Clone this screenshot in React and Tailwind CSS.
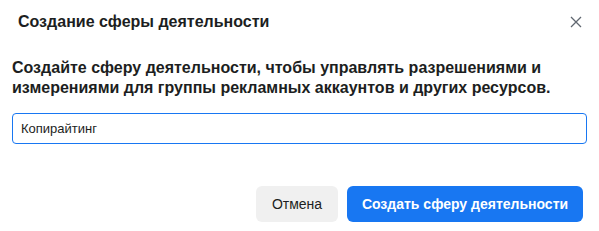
import React from "react";

export default function App() {
  return (
    <div className="w-[599px] h-[231px] bg-white text-[#1c1e21]" style={{ fontFamily: '"Liberation Sans", Arial, sans-serif' }}>
      <div className="flex items-center justify-between pl-[18px] pr-[17px] pt-[12px]">
        <div className="text-[16px] font-bold leading-[20px]">Создание сферы деятельности</div>
        <svg width="12" height="12" viewBox="0 0 12 12" className="text-[#606770]">
          <path d="M1 1 L11 11 M11 1 L1 11" stroke="currentColor" strokeWidth="1.3" fill="none" />
        </svg>
      </div>
      <div className="px-[12px] pt-[26px]">
        <div className="text-[16px] font-bold leading-[20px]">
          Создайте сферу деятельности, чтобы управлять разрешениями и измерениями для группы рекламных аккаунтов и других ресурсов.
        </div>
        <div className="mt-[15px] h-[31px] w-[575px] border border-[#1877f2] rounded-[4px] flex items-center px-[8px] text-[13px]">
          Копирайтинг
        </div>
      </div>
      <div className="flex justify-end gap-[9px] pr-[16px] pt-[42px]">
        <button className="h-[36px] w-[82px] rounded-[6px] bg-[#f0f0f0] text-[14px] text-[#1c1e21]">Отмена</button>
        <button className="h-[36px] w-[236px] rounded-[6px] bg-[#1877f2] text-[14px] font-bold text-white">Создать сферу деятельности</button>
      </div>
    </div>
  );
}
